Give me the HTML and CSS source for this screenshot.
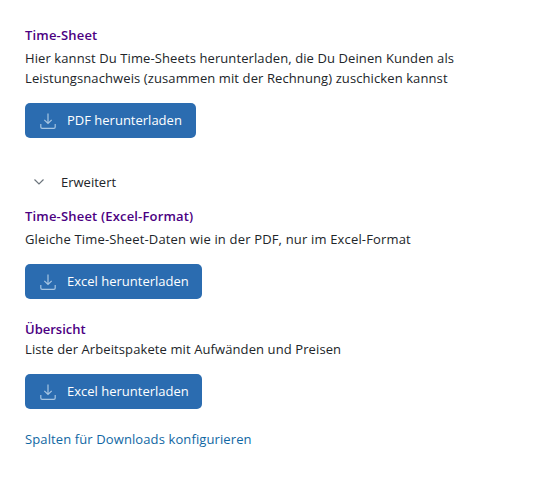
FILE: index.html
```
<!DOCTYPE html>
<html lang="de">
<head>
  <meta charset="UTF-8" />
  <meta name="viewport" content="width=device-width, initial-scale=1.0" />
  <title>Downloads</title>
  <link rel="stylesheet" href="styles.css">
</head>
<body>
  <svg class="sprite" aria-hidden="true">
    <symbol id="download" viewBox="0 0 16 16">
      <path d="M8 .5v10M4.3 6.8 8 10.5l3.7-3.7M.8 11v3a1.3 1.3 0 0 0 1.3 1.3h11.8a1.3 1.3 0 0 0 1.3-1.3v-3" />
    </symbol>
  </svg>

  <main class="downloads">
    <section class="download">
      <h2 class="title">Time-Sheet</h2>
      <p class="text">Hier kannst Du Time-Sheets herunterladen, die Du Deinen Kunden als Leistungsnachweis (zusammen mit der Rechnung) zuschicken kannst</p>
      <button type="button" class="btn btn-pdf"><svg class="icon"><use href="#download" /></svg><span>PDF herunterladen</span></button>
    </section>

    <div class="toggle">
      <svg class="chevron" viewBox="0 0 10 6"><path d="M.5.5 5 5 9.5.5" /></svg>
      <span>Erweitert</span>
    </div>

    <section class="download">
      <h2 class="title">Time-Sheet (Excel-Format)</h2>
      <p class="text text-excel">Gleiche Time-Sheet-Daten wie in der PDF, nur im Excel-Format</p>
      <button type="button" class="btn"><svg class="icon"><use href="#download" /></svg><span>Excel herunterladen</span></button>
    </section>

    <section class="download overview">
      <h2 class="title">Übersicht</h2>
      <p class="text">Liste der Arbeitspakete mit Aufwänden und Preisen</p>
      <button type="button" class="btn"><svg class="icon"><use href="#download" /></svg><span>Excel herunterladen</span></button>
    </section>

    <a class="config" href="#">Spalten für Downloads konfigurieren</a>
  </main>
</body>
</html>
```
FILE: styles.css
```
:root {
  --primary: #2b6cb0;
  --title: #4b0082;
  --link: #1067a3;
  --text: #212529;
}
body {
  margin: 0;
  background: #fff;
  color: var(--text);
  font-family: "Open Sans", "Noto Sans", sans-serif;
  font-size: 13px;
  line-height: 20px;
}
.sprite { display: none; }
.downloads { padding: 25px; }
.title {
  margin: 0 0 3px;
  color: var(--title);
  font-size: 13px;
  font-weight: 600;
  letter-spacing: 0.18px;
}
.text {
  margin: 0 0 15px;
  max-width: 450px;
  letter-spacing: 0.1px;
}
.text-excel { letter-spacing: 0.165px; }
.overview { margin-top: 20px; }
.overview .title {
  margin-bottom: 0;
  letter-spacing: 0;
}
.btn {
  display: flex;
  align-items: center;
  gap: 11px;
  width: 177px;
  height: 35px;
  padding: 0 0 1px 15px;
  border: none;
  border-radius: 5px;
  background: var(--primary);
  color: #fff;
  font: inherit;
  font-weight: 500;
  white-space: nowrap;
  cursor: pointer;
}
.btn-pdf { width: 171px; }
.icon {
  width: 16px;
  height: 16px;
  margin-top: 2px;
  fill: none;
  stroke: #a6c5e2;
  stroke-width: 1.2;
}
.toggle {
  display: flex;
  align-items: center;
  gap: 17px;
  margin: 34px 0 14px;
  padding-left: 9px;
}
.chevron {
  width: 10px;
  height: 6px;
  fill: none;
  stroke: #6c757d;
  stroke-width: 1.2;
}
.config {
  display: inline-block;
  margin-top: 20px;
  color: var(--link);
  letter-spacing: 0.11px;
  text-decoration: none;
}
```
